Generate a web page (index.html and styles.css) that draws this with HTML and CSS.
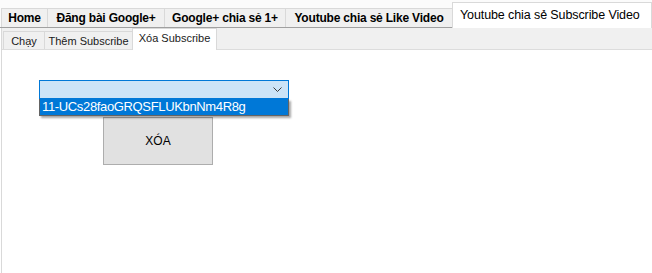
FILE: index.html
```html
<!DOCTYPE html>
<html>
<head>
<meta charset="utf-8">
<link rel="stylesheet" href="styles.css">
</head>
<body>
<div class="window">
  <div class="outer-tabs">
    <div class="otab otab-first w-home">Home</div>
    <div class="otab w-dang">Đăng bài Google+</div>
    <div class="otab w-gplus">Google+ chia sẻ 1+</div>
    <div class="otab w-like">Youtube chia sẻ Like Video</div>
    <div class="otab otab-active">Youtube chia sẻ Subscribe Video</div>
  </div>
  <div class="outer-panel">
    <div class="inner-tabs">
      <div class="itab w-chay">Chạy</div>
      <div class="itab w-them">Thêm Subscribe</div>
      <div class="itab itab-active w-xoa">Xóa Subscribe</div>
    </div>
    <div class="content">
      <div class="combo-wrap">
        <div class="combo">
          <svg class="chev" width="9" height="5" viewBox="0 0 9 5"><path d="M0.5 0.5 L4.5 4.5 L8.5 0.5" fill="none" stroke="#3c3c3c" stroke-width="1"/></svg>
        </div>
        <div class="droplist">
          <div class="dropitem">11-UCs28faoGRQSFLUKbnNm4R8g</div>
        </div>
      </div>
      <div class="btn">XÓA</div>
    </div>
  </div>
</div>
</body>
</html>
```
FILE: styles.css
```css
html, body {
  margin: 0;
  padding: 0;
  background: #ffffff;
  width: 652px;
  height: 273px;
  overflow: hidden;
}
.window {
  font-family: "Liberation Sans", Arial, sans-serif;
  color: #000;
}
.outer-tabs {
  display: flex;
  align-items: flex-end;
  height: 28px;
  padding-left: 1px;
  border-bottom: 1px solid #a0a0a0;
  box-sizing: border-box;
  background: #fbfbfb;
}
.otab {
  height: 19px;
  line-height: 19px;
  font-size: 12px;
  font-weight: bold;
  background: #f0f0f0;
  border: 1px solid #d9d9d9;
  border-bottom: none;
  margin-left: -1px;
  white-space: nowrap;
  text-align: center;
  box-sizing: border-box;
  letter-spacing: -0.2px;
}
.otab-first {
  margin-left: 0;
}
.w-home { width: 47px; }
.w-dang { width: 118px; }
.w-gplus { width: 122px; }
.w-like { width: 168px; }
.otab-active {
  height: 26px;
  line-height: 24px;
  background: #ffffff;
  font-weight: normal;
  font-size: 12.5px;
  letter-spacing: -0.1px;
  text-align: left;
  padding-left: 7px;
  margin-bottom: -1px;
  flex: 1;
}
.outer-panel {
  height: 245px;
  background: #ffffff;
  border-left: 1px solid #d9d9d9;
  margin-left: 1px;
}
.inner-tabs {
  display: flex;
  align-items: flex-end;
  height: 22px;
  background: #f0f0f0;
  border-bottom: 1px solid #dcdcdc;
  padding-left: 2px;
  box-sizing: border-box;
}
.itab {
  height: 18px;
  line-height: 19px;
  font-size: 11px;
  color: #1a1a1a;
  background: #f0f0f0;
  border: 1px solid #d9d9d9;
  border-bottom: none;
  margin-left: -1px;
  white-space: nowrap;
  text-align: center;
  box-sizing: border-box;
}
.w-chay { width: 42px; }
.w-them { width: 89px; }
.w-xoa { width: 85px; }
.itab-active {
  height: 22px;
  line-height: 19px;
  background: #ffffff;
  margin-bottom: -1px;
}
.content {
  padding: 30px 0 0 37px;
}
.combo-wrap {
  position: relative;
  width: 250px;
}
.combo {
  height: 19px;
  background: #cce4f7;
  border: 1px solid #0078d7;
  box-sizing: border-box;
  display: flex;
  align-items: center;
  justify-content: flex-end;
  padding-right: 6px;
}
.chev {
  display: block;
}
.droplist {
  position: absolute;
  left: 0;
  top: 19px;
  width: 250px;
  height: 17px;
  background: #0078d7;
  border: 1px solid #646464;
  border-top: none;
  box-sizing: border-box;
  box-shadow: 2px 2px 2px rgba(0, 0, 0, 0.35);
  z-index: 2;
}
.dropitem {
  color: #ffffff;
  font-size: 13px;
  line-height: 16px;
  padding-left: 2px;
  white-space: nowrap;
  letter-spacing: -0.35px;
}
.btn {
  margin: 18px 0 0 64px;
  width: 110px;
  height: 48px;
  box-sizing: border-box;
  background: #e1e1e1;
  border: 1px solid #adadad;
  display: flex;
  align-items: center;
  justify-content: center;
  font-size: 12px;
}
```
